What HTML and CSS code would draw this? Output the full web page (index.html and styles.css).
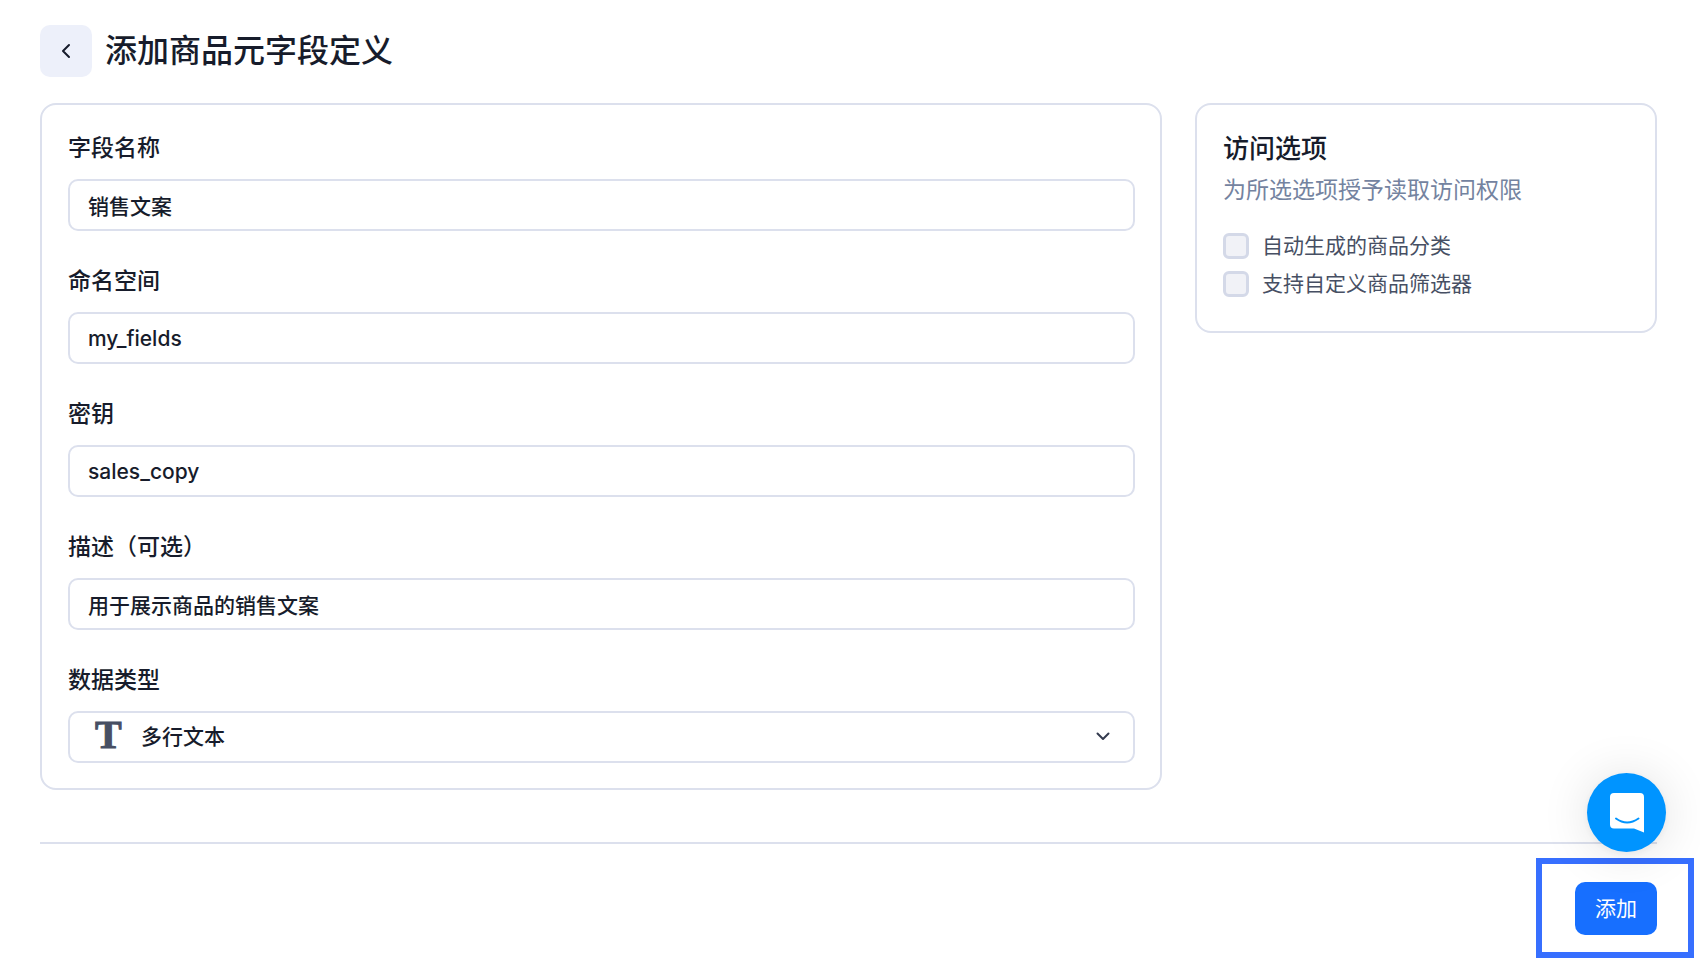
FILE: index.html
```html
<!DOCTYPE html>
<html lang="zh-CN">
<head>
    <meta charset="UTF-8">
    <meta name="viewport" content="width=device-width, initial-scale=1.0">
    <title>添加商品元字段定义</title>
    <link rel="stylesheet" href="styles.css">
</head>
<body>
    <div class="page">
        <header class="page-header">
            <button class="back" type="button" aria-label="返回">
                <svg width="10" height="16" viewBox="0 0 10 16" fill="none" stroke="currentColor" stroke-width="2" stroke-linecap="round" stroke-linejoin="round">
                    <path d="M8 2L2 8L8 14"/>
                </svg>
            </button>
            <h1>添加商品元字段定义</h1>
        </header>

        <form id="fieldForm">
            <div class="columns">
                <section class="card">
                    <div class="field">
                        <label for="fieldName">字段名称</label>
                        <input type="text" id="fieldName" value="销售文案">
                    </div>
                    <div class="field">
                        <label for="namespace">命名空间</label>
                        <input type="text" id="namespace" value="my_fields">
                    </div>
                    <div class="field">
                        <label for="fieldKey">密钥</label>
                        <input type="text" id="fieldKey" value="sales_copy">
                    </div>
                    <div class="field">
                        <label for="description">描述（可选）</label>
                        <input type="text" id="description" value="用于展示商品的销售文案">
                    </div>
                    <div class="field">
                        <label for="dataType">数据类型</label>
                        <div class="select-wrap">
                            <span class="type-icon" aria-hidden="true">T</span>
                            <select id="dataType">
                                <option>多行文本</option>
                            </select>
                            <svg class="arrow" width="14" height="9" viewBox="0 0 14 9" fill="none" stroke="currentColor" stroke-width="2" stroke-linecap="round" stroke-linejoin="round">
                                <path d="M1.5 1.5L7 7L12.5 1.5"/>
                            </svg>
                        </div>
                    </div>
                </section>

                <aside class="card access">
                    <h2>访问选项</h2>
                    <p class="hint">为所选选项授予读取访问权限</p>
                    <div class="option">
                        <input type="checkbox" id="autoCategory">
                        <label for="autoCategory">自动生成的商品分类</label>
                    </div>
                    <div class="option">
                        <input type="checkbox" id="customFilter">
                        <label for="customFilter">支持自定义商品筛选器</label>
                    </div>
                </aside>
            </div>

            <div class="footer">
                <div class="submit-wrap">
                    <button class="add" type="submit">添加</button>
                </div>
            </div>
        </form>
    </div>

    <button class="chat" type="button" aria-label="聊天">
        <svg width="36" height="40" viewBox="0 0 36 40">
            <path fill="#fff" d="M5 0H31Q35 0 35 4V39.500Q30 37.500 25 35.500H5Q1 35.500 1 31.500V4Q1 0 5 0Z"/>
            <path fill="none" stroke="#0094ff" stroke-width="2" stroke-linecap="round" d="M7 25.500Q18 33.500 29.500 25.500"/>
        </svg>
    </button>
</body>
</html>
```
FILE: styles.css
```css
* {
    box-sizing: border-box;
}

body {
    margin: 0;
    background: #fff;
    color: #171c2b;
    font-family: Inter, "Noto Sans CJK SC", sans-serif;
    font-size: 21px;
    line-height: 32px;
}

h1, h2, p {
    margin: 0;
    font-weight: 500;
}

button, input, select {
    font: inherit;
    color: inherit;
}

.page {
    padding: 25px 43px 23px 40px;
}

.page-header {
    display: flex;
    align-items: center;
    gap: 13px;
    margin-bottom: 26px;
}

h1 {
    font-size: 32px;
    line-height: 52px;
}

.back {
    display: flex;
    align-items: center;
    justify-content: center;
    width: 52px;
    height: 52px;
    padding: 0;
    border: none;
    border-radius: 10px;
    background: #edf0fa;
    cursor: pointer;
}

.columns {
    display: grid;
    grid-template-columns: 17fr 7fr;
    align-items: start;
    gap: 33px;
}

.card {
    padding: 26px 25px 25px 26px;
    border: 2px solid #dce0ed;
    border-radius: 16px;
}

.field + .field {
    margin-top: 33px;
}

.field label {
    display: block;
    margin-bottom: 13px;
    font-size: 23px;
    font-weight: 500;
    line-height: 35px;
}

.field input, .field select {
    display: block;
    width: 100%;
    height: 52px;
    padding: 0 18px;
    border: 2px solid #dce0ed;
    border-radius: 10px;
    background: #fff;
    font-weight: 500;
    outline: none;
}

.select-wrap {
    position: relative;
}

.field select {
    appearance: none;
    padding-left: 71px;
}

.type-icon {
    position: absolute;
    top: 0;
    left: 27px;
    color: #474f63;
    font-family: "Liberation Serif", serif;
    font-size: 40px;
    font-weight: bold;
    line-height: 48px;
    -webkit-text-stroke: 1px #474f63;
    pointer-events: none;
}

.arrow {
    position: absolute;
    top: 21px;
    right: 25px;
    color: #343b4f;
    pointer-events: none;
}

h2 {
    font-size: 26px;
    line-height: 36px;
}

.hint {
    margin: 5px 0 19px;
    color: #7483a0;
    font-size: 23px;
    font-weight: 400;
    line-height: 36px;
}

.option {
    display: flex;
    align-items: center;
    gap: 13px;
    height: 38px;
    color: #474f63;
}

.option input {
    appearance: none;
    width: 26px;
    height: 26px;
    margin: 0;
    border: 3px solid #d4d9e8;
    border-radius: 6px;
    background: #f1f2f7;
}

.option input:checked {
    background: #176fff;
}

.access {
    padding-bottom: 28px;
}

.footer {
    display: flex;
    justify-content: flex-end;
    margin-top: 52px;
    padding-top: 38px;
    border-top: 2px solid #dce0ed;
}

.submit-wrap {
    position: relative;
}

/* frame round the submit button */
.submit-wrap::after {
    content: "";
    position: absolute;
    inset: -24px -37px -23px -39px;
    border: 6px solid #376fff;
    pointer-events: none;
}

.add {
    display: block;
    height: 53px;
    padding: 0 20px;
    border: none;
    border-radius: 10px;
    background: #176fff;
    color: #fff;
    cursor: pointer;
}

.chat {
    position: fixed;
    right: 34px;
    bottom: 106px;
    display: flex;
    align-items: center;
    justify-content: center;
    width: 79px;
    height: 79px;
    padding: 0;
    border: none;
    border-radius: 50%;
    background: #0094ff;
    box-shadow: 0 2px 8px rgba(0, 0, 0, 0.06), 0 2px 50px rgba(0, 0, 0, 0.12);
    cursor: pointer;
}
```
